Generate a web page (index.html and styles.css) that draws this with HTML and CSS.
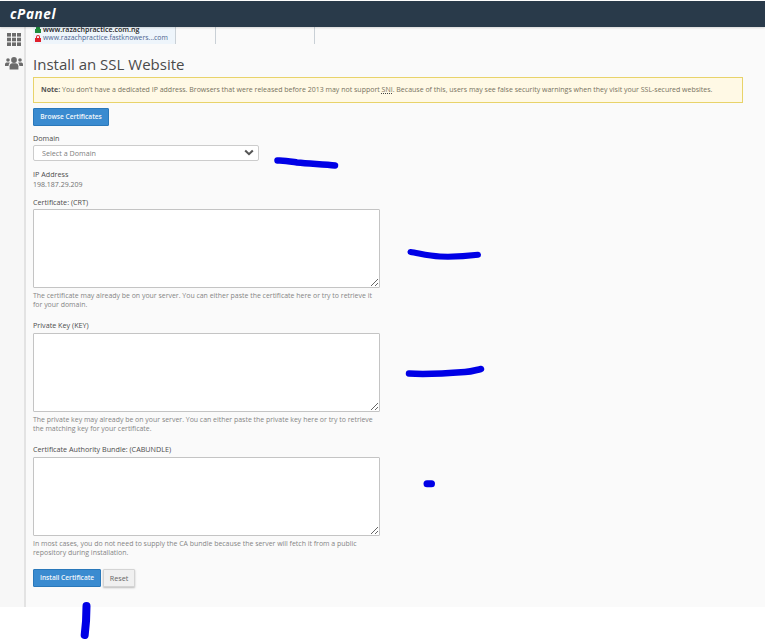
FILE: index.html
```html
<!DOCTYPE html>
<html lang="en">
<head>
<meta charset="utf-8">
<title>Install an SSL Website</title>
<link rel="stylesheet" href="styles.css">
</head>
<body>
<header class="topbar"><span class="logo">cPanel</span></header>
<div class="page">
  <nav class="sidebar">
    <svg class="nav-icon" width="14" height="13" viewBox="0 0 14 13">
      <g fill="#6b6b6b">
        <rect x="0" y="0" width="4" height="3.6"/><rect x="5" y="0" width="4" height="3.6"/><rect x="10" y="0" width="4" height="3.6"/>
        <rect x="0" y="4.7" width="4" height="3.6"/><rect x="5" y="4.7" width="4" height="3.6"/><rect x="10" y="4.7" width="4" height="3.6"/>
        <rect x="0" y="9.4" width="4" height="3.6"/><rect x="5" y="9.4" width="4" height="3.6"/><rect x="10" y="9.4" width="4" height="3.6"/>
      </g>
    </svg>
    <svg class="nav-icon users" width="18" height="13" viewBox="0 0 18 13">
      <g fill="#6b6b6b">
        <circle cx="9" cy="3" r="2.9"/>
        <circle cx="3" cy="3" r="1.8"/>
        <circle cx="15" cy="3" r="1.8"/>
        <path d="M4.6 12.6V9.2c0-2 1.4-3 2.6-3h3.6c1.2 0 2.6 1 2.6 3v3.4z"/>
        <path d="M0 9V7.2C0 6 1 5.4 2 5.4h2c.3 0 .6.1.8.3C4 6.500 3.700 7.500 3.600 9z"/>
        <path d="M18 9V7.2C18 6 17 5.400 16 5.400h-2c-.3 0-.6.1-.8.3.8.8 1.100 1.800 1.200 3.300z"/>
      </g>
    </svg>
  </nav>
  <main class="content">
    <div class="tabs">
      <div class="tab tab-active">
        <div class="site site-strong">
          <svg class="lock" width="6" height="7" viewBox="0 0 6 7"><path fill="#1f8a3b" d="M1 3V2a2 2 0 0 1 4 0v1h1v4H0V3z"/></svg>www.razachpractice.com.ng
        </div>
        <div class="site">
          <svg class="lock" width="6" height="7" viewBox="0 0 6 7"><path fill="#e0202c" d="M1 3V2a2 2 0 0 1 4 0v1h1v4H0V3zm1 0h2V2a1 1 0 0 0-2 0z"/></svg>www.razachpractice.fastknowers...com
        </div>
      </div>
      <div class="tab tab-short"></div>
      <div class="tab tab-wide"></div>
    </div>

    <h1 class="title">Install an SSL Website</h1>

    <div class="alert"><strong>Note:</strong> You don’t have a dedicated IP address. Browsers that were released before 2013 may not support <abbr class="abbr">SNI</abbr>. Because of this, users may see false security warnings when they visit your SSL-secured websites.</div>

    <button class="btn btn-primary btn-browse" type="button">Browse Certificates</button>

    <form class="form">
      <div class="field field-domain">
        <label class="label" for="domain">Domain</label>
        <div class="select-wrap">
          <select class="select" id="domain"><option>Select a Domain</option></select>
          <svg class="chevron" width="10" height="7" viewBox="0 0 11 7"><path d="M1.300 1.300 5.500 5.300 9.700 1.300" fill="none" stroke="#555" stroke-width="2.300"/></svg>
        </div>
      </div>
      <div class="field field-ip">
        <div class="label">IP Address</div>
        <div class="value">198.187.29.209</div>
      </div>
      <div class="field field-area">
        <label class="label" for="crt">Certificate: (CRT)</label>
        <textarea class="area" id="crt"></textarea>
        <p class="help">The certificate may already be on your server. You can either paste the certificate here or try to retrieve it for your domain.</p>
      </div>
      <div class="field field-area">
        <label class="label" for="key">Private Key (KEY)</label>
        <textarea class="area" id="key"></textarea>
        <p class="help">The private key may already be on your server. You can either paste the private key here or try to retrieve the matching key for your certificate.</p>
      </div>
      <div class="field field-area">
        <label class="label" for="ca">Certificate Authority Bundle: (CABUNDLE)</label>
        <textarea class="area" id="ca"></textarea>
        <p class="help">In most cases, you do not need to supply the CA bundle because the server will fetch it from a public repository during installation.</p>
      </div>
      <div class="actions">
        <button class="btn btn-primary btn-install" type="button">Install Certificate</button>
        <button class="btn btn-reset" type="reset">Reset</button>
      </div>
    </form>
  </main>
</div>
<svg class="scribbles" width="765" height="639" viewBox="0 0 765 639">
  <g fill="none" stroke="#0000e6" stroke-linecap="round" stroke-linejoin="round">
    <path stroke-width="6.500" d="M277.500 160.500C284 160 291 161.500 297 162.500C310 164 325 164 335 165.500"/>
    <path stroke-width="6" d="M410.500 252C418 253 428 256 440 256.500C455 257 468 256 478 254.800"/>
    <path stroke-width="6.500" d="M409 373.500C425 374.500 445 373.500 465 372C472 371.500 476 370 481 369"/>
    <path stroke-width="7" d="M427 483.700H431.500"/>
    <path stroke-width="8" d="M86.500 606C86.500 615 86 625 84.700 635"/>
  </g>
</svg>
</body>
</html>
```

FILE: styles.css
```css
* {
  box-sizing: border-box;
}

html,
body {
  margin: 0;
  padding: 0;
  background: #fff;
}

body {
  position: relative;
  height: 639px;
  overflow: hidden;
  font-family: "Open Sans", "Liberation Sans", sans-serif;
  color: #444;
}

.topbar {
  position: relative;
  z-index: 2;
  height: 26px;
  margin-top: 1px;
  padding-left: 10px;
  display: flex;
  align-items: center;
  background: #293a4a;
  box-shadow: 0 1px 2px rgba(0, 0, 0, 0.15);
}

.logo {
  color: #fff;
  font-size: 13.500px;
  font-weight: 700;
  font-style: italic;
  letter-spacing: 0.6px;
}

.page {
  display: flex;
  height: 580px;
  background: #fafafa;
}

.sidebar {
  flex: none;
  width: 26px;
  display: flex;
  flex-direction: column;
  align-items: center;
  padding: 6px 0 0 4px;
  gap: 11px;
  background: #f7f7f7;
  border-right: 2px solid #e3e3e3;
}

.nav-icon {
  display: block;
}

.content {
  flex: 1;
  min-width: 0;
  padding: 0 22px 0 7px;
}

.tabs {
  display: flex;
  height: 17px;
  overflow: hidden;
}

.tab {
  border-right: 1px solid #c9d0d6;
}

.tab-active {
  width: 143px;
  padding: 0 0 0 2px;
  background: #eef5fb;
}

.tab-short {
  width: 40px;
}

.tab-wide {
  width: 99px;
}

.site {
  display: flex;
  align-items: center;
  gap: 2px;
  height: 8px;
  font-size: 6.900px;
  line-height: 8px;
  white-space: nowrap;
  color: #4a6490;
}

.site-strong {
  margin-top: -2px;
  margin-bottom: 1px;
  font-size: 7.100px;
  color: #222;
  font-weight: 600;
}

.lock {
  flex: none;
}

.title {
  margin: 10px 0 0;
  font-size: 15px;
  line-height: 20px;
  font-weight: 400;
  color: #4a4a4a;
}

.alert {
  height: 26px;
  margin-top: 3px;
  padding: 0 7px;
  display: block;
  line-height: 24px;
  font-size: 7px;
  white-space: nowrap;
  color: #77725e;
  background: #fff9e5;
  border: 1px solid #e8d36a;
}

.alert strong {
  color: #555;
  font-weight: 700;
}

.abbr {
  text-decoration: underline dotted #444;
}

.btn {
  display: block;
  margin: 0;
  padding: 0;
  font-family: inherit;
  font-size: 6.600px;
  font-weight: 600;
  border-radius: 1px;
  cursor: pointer;
}

.btn-primary {
  padding-bottom: 1px;
  color: #f2f7fb;
  background: #3a8bd0;
  border: 1px solid #2a78ba;
}

.btn-browse {
  width: 76px;
  height: 18px;
  margin-top: 5px;
}

.form {
  display: block;
}

.field-domain {
  margin-top: 8px;
}

.label {
  display: block;
  height: 8px;
  font-size: 7.200px;
  line-height: 8px;
  color: #4d4d4d;
}

.select-wrap {
  position: relative;
  width: 226px;
  height: 16px;
  margin-top: 3px;
}

.select {
  display: block;
  width: 100%;
  height: 100%;
  padding: 0 0 0 8px;
  appearance: none;
  font-family: inherit;
  font-size: 7.200px;
  color: #808080;
  background: #fff;
  border: 1px solid #ccc;
  border-radius: 2px;
}

.chevron {
  position: absolute;
  top: 4px;
  right: 5px;
}

.field-ip {
  margin-top: 9px;
}

.value {
  margin-top: 3px;
  height: 8px;
  font-size: 7px;
  line-height: 8px;
  color: #707070;
}

.field-area {
  margin-top: 12px;
}

.field-ip + .field-area {
  margin-top: 9px;
}

.area {
  display: block;
  width: 347px;
  height: 79px;
  margin-top: 3px;
  background: #fff;
  border: 1px solid #c4c4c4;
  border-radius: 1px;
}

.field-area + .field-area .area {
  margin-top: 4px;
}

.help {
  width: 347px;
  margin: 4px 0 0;
  font-size: 6.950px;
  line-height: 8.500px;
  color: #858585;
}

.actions {
  display: flex;
  gap: 2px;
  margin-top: 12px;
}

.btn-install {
  width: 68px;
  height: 18px;
}

.btn-reset {
  width: 32px;
  height: 18px;
  font-size: 7.200px;
  font-weight: 400;
  color: #666;
  background: #f0f0f0;
  border: 1px solid #d4d4d4;
  box-shadow: 0 1px 2px rgba(0, 0, 0, 0.25);
}

.scribbles {
  position: absolute;
  top: 0;
  left: 0;
  z-index: 3;
  pointer-events: none;
}
```
